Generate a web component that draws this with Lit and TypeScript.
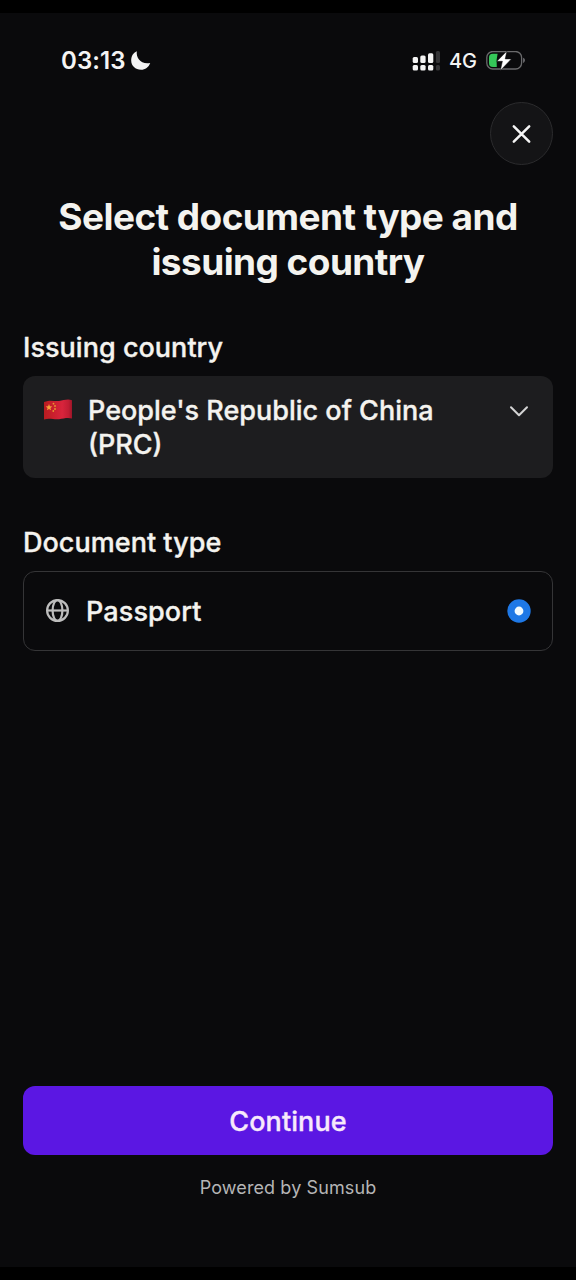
import { LitElement, html, css } from "lit";
import { customElement } from "lit/decorators.js";

@customElement("status-bar")
class StatusBar extends LitElement {
  static styles = css`
    :host { display: flex; align-items: center; justify-content: space-between; height: 40px; padding: 0 50px 0 61px; color: #f4f4f4; }
    .left, .right { display: flex; align-items: center; }
    .time { font-size: 24px; font-weight: 600; line-height: 30px; letter-spacing: 0.1px; }
    .moon { margin-left: 5px; }
    .net { font-size: 20px; font-weight: 500; line-height: 30px; margin: 0 9px 0 9px; }
    svg { display: block; }
  `;
  render() {
    return html`
      <div class="left">
        <span class="time">03:13</span>
        <svg class="moon" width="20" height="20" viewBox="0 0 20 20"><path fill="#f4f4f4" d="M5.8 0.3C4.9 7.5 10.2 13.7 19.2 11.9C17.6 16.3 14.3 18.7 10.1 18.7C4.4 18.7 0.2 14.7 0.2 9.5C0.2 5.3 2.2 1.8 5.8 0.3Z"/></svg>
      </div>
      <div class="right">
        <svg width="28" height="20" viewBox="0 0 28 20">
          <g fill="#f4f4f4">
            <rect x="0.7" y="6" width="5.3" height="6" rx="1.5"/><rect x="8.3" y="4.5" width="5.3" height="7.5" rx="1.5"/><rect x="16" y="2.3" width="5.3" height="9.7" rx="1.5"/>
            <rect x="0.7" y="14" width="5.3" height="5.5" rx="1.5"/><rect x="8.3" y="14" width="5.3" height="5.5" rx="1.5"/><rect x="16" y="14" width="5.3" height="5.5" rx="1.5"/>
          </g>
          <g fill="#343436"><rect x="23.9" y="0" width="4.1" height="12" rx="1.5"/><rect x="23.9" y="14" width="4.1" height="5.5" rx="1.5"/></g>
        </svg>
        <span class="net">4G</span>
        <svg width="40" height="20" viewBox="0 0 40 20">
          <rect x="0.8" y="0.5" width="34.8" height="17.5" rx="6" fill="none" stroke="#6a6a6c" stroke-width="1.3"/>
          <path d="M37.2 6.8C39.4 7.5 39.4 11.2 37.2 11.9Z" fill="#77777a"/>
          <path d="M7 2.7H11.6L10.6 8.9L10.8 15.9H7C4 15.9 3 14.3 3 11.9V6.7C3 4.3 4 2.7 7 2.7Z" fill="#35c759"/>
          <path d="M20.9 0.1L10.9 10.3H16.4L14.3 19.6L25.4 7.9H19.2Z" fill="#fff" stroke="#0a0a0c" stroke-width="0.5" stroke-linejoin="round"/>
        </svg>
      </div>`;
  }
}

@customElement("app-root")
class AppRoot extends LitElement {
  static styles = css`
    :host { display: block; height: 1280px; background: #000; font-family: Inter, "Liberation Sans", sans-serif; color: #f4f3ef; }
    * { box-sizing: border-box; }
    svg { display: block; flex: none; }
    .frame { height: 1280px; padding: 13px 0; }
    .screen { height: 1254px; background: #0a0a0c; padding: 28px 23px 0; display: flex; flex-direction: column; }
    status-bar { margin: 0 -23px; flex: none; }
    .close { align-self: flex-end; margin-top: 21px; width: 63px; height: 63px; border-radius: 50%; border: 1.5px solid #2b2b2d; background: #141416; display: flex; align-items: center; justify-content: center; padding: 0; flex: none; }
    .title { margin: 29px 0 0; text-align: center; font-size: 37px; font-weight: 700; line-height: 45px; letter-spacing: -0.57px; }
    .label, .country, .name, .continue { font-family: Inter, "Liberation Sans", sans-serif; font-size: 27px; font-weight: 500; line-height: 34px; letter-spacing: 0.03px; -webkit-text-stroke: 0.35px currentColor; white-space: nowrap; }
    .l1 { margin-top: 47px; }
    .l2 { margin-top: 48px; }
    .select { margin-top: 11px; height: 102px; border-radius: 12px; background: #1d1d1f; display: flex; align-items: flex-start; padding: 18px 24px 0 20px; }
    .flag { margin-top: 4px; }
    .country { flex: 1; margin-left: 15px; letter-spacing: 0; }
    .chev { margin-top: 7px; }
    .option { margin-top: 11px; height: 80px; border-radius: 12px; border: 1.5px solid #353537; display: flex; align-items: center; padding: 0 21px 1px; }
    .name { flex: 1; margin-left: 16px; padding-top: 2px; letter-spacing: 0.1px; }
    .spacer { flex: 1; }
    .continue { height: 69px; flex: none; border: 0; border-radius: 12px; background: #5b17e3; color: #f7e9fb; padding: 2px 0 0; letter-spacing: 0.1px; }
    .powered { margin: 21px 0 67px; text-align: center; font-size: 18px; line-height: 24px; letter-spacing: 0.1px; color: #b5b5b6; }
  `;
  render() {
    return html`
      <div class="frame"><div class="screen">
        <status-bar></status-bar>
        <button class="close" aria-label="Close">
          <svg width="20" height="20" viewBox="0 0 20 20"><path d="M1.8 2.3L17.2 17.7M17.2 2.3L1.8 17.7" stroke="#f5f5f5" stroke-width="2.5" stroke-linecap="round"/></svg>
        </button>
        <h1 class="title">Select document type and<br>issuing country</h1>
        <div class="label l1">Issuing country</div>
        <div class="select">
          <svg class="flag" width="30" height="24" viewBox="0 0 30 24">
            <defs><linearGradient id="wave"><stop offset="0" stop-color="#b81c20"/><stop offset=".3" stop-color="#c81f2c"/><stop offset=".65" stop-color="#d8243c"/><stop offset=".88" stop-color="#c01d33"/><stop offset="1" stop-color="#9c1528"/></linearGradient></defs>
            <path d="M1 4C8 1.5 11 3.5 16 3C21 2 25 0.8 29 2.2V20.5C25 19.3 21 20.3 16 21.2C11 22 7 19.5 1 21.5Z" fill="url(#wave)"/>
            <path d="M6 6l.9 2.3 2.4.1-1.9 1.5.7 2.3L6 10.9l-2.1 1.3.7-2.3-1.9-1.5 2.4-.1Z" fill="#f5a33a"/>
            <g fill="#e8982f"><circle cx="10.5" cy="5.7" r=".9"/><circle cx="12" cy="8" r=".9"/><circle cx="12" cy="11" r=".9"/><circle cx="10.3" cy="13" r=".9"/></g>
          </svg>
          <div class="country">People's Republic of China<br>(PRC)</div>
          <svg class="chev" width="20" height="20" viewBox="0 0 20 20"><path d="M2 6.2L10 14.2L18 6.2" fill="none" stroke="#d4d4d4" stroke-width="2" stroke-linecap="round" stroke-linejoin="round"/></svg>
        </div>
        <div class="label l2">Document type</div>
        <div class="option">
          <svg width="25" height="25" viewBox="0 0 25 25" fill="none" stroke="#bdbdbd" stroke-width="2.2"><circle cx="12.5" cy="12.5" r="10.4"/><ellipse cx="12.5" cy="12.5" rx="4.9" ry="10.4"/><path d="M2 12.5H23"/></svg>
          <div class="name">Passport</div>
          <svg width="24" height="24" viewBox="0 0 24 24"><circle cx="12" cy="12" r="11.7" fill="#1e78e6"/><circle cx="12" cy="12" r="4.4" fill="#f2fbff"/></svg>
        </div>
        <div class="spacer"></div>
        <button class="continue">Continue</button>
        <div class="powered">Powered by Sumsub</div>
      </div></div>`;
  }
}
